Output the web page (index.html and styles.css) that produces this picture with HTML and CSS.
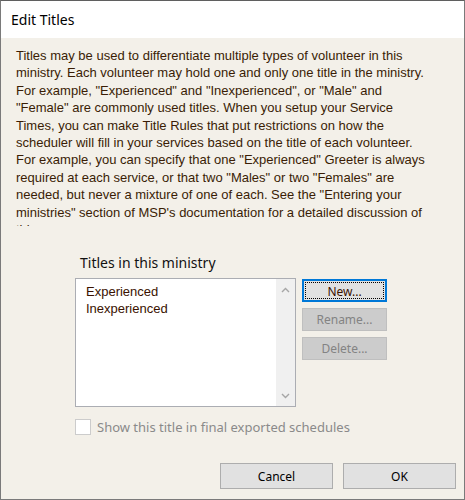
FILE: index.html
```html
<!DOCTYPE html>
<html lang="en">
<head>
    <meta charset="UTF-8">
    <title>Edit Titles</title>
    <link rel="stylesheet" href="styles.css">
</head>
<body>
    <div class="window">
        <div class="titlebar">Edit Titles</div>
        <div class="content">
            <div class="intro">
                Titles may be used to differentiate multiple types of volunteer in this<br>
                ministry. Each volunteer may hold one and only one title in the ministry.<br>
                For example, "Experienced" and "Inexperienced", or "Male" and<br>
                "Female" are commonly used titles. When you setup your Service<br>
                Times, you can make Title Rules that put restrictions on how the<br>
                scheduler will fill in your services based on the title of each volunteer.<br>
                For example, you can specify that one "Experienced" Greeter is always<br>
                required at each service, or that two "Males" or two "Females" are<br>
                needed, but never a mixture of one of each. See the "Entering your<br>
                ministries" section of MSP's documentation for a detailed discussion of<br>
                this.
            </div>

            <div class="titles">
                <div class="label">Titles in this ministry</div>
                <div class="row">
                    <div class="listbox">
                        <ul class="items">
                            <li>Experienced</li>
                            <li>Inexperienced</li>
                        </ul>
                        <div class="scrollbar">
                            <svg width="9" height="6" viewBox="0 0 9 6"><path d="M1 5 L4.5 1.5 L8 5" fill="none" stroke="#a6a6a6" stroke-width="1.4"/></svg>
                            <svg width="9" height="6" viewBox="0 0 9 6"><path d="M1 1 L4.5 4.5 L8 1" fill="none" stroke="#a6a6a6" stroke-width="1.4"/></svg>
                        </div>
                    </div>
                    <div class="side-btns">
                        <button class="btn focused"><span>New...</span></button>
                        <button class="btn" disabled>Rename...</button>
                        <button class="btn" disabled>Delete...</button>
                    </div>
                </div>
                <div class="check">
                    <span class="box"></span>
                    Show this title in final exported schedules
                </div>
            </div>

            <div class="footer">
                <button class="btn big">Cancel</button>
                <button class="btn big">OK</button>
            </div>
        </div>
    </div>
</body>
</html>
```

FILE: styles.css
```css
body{
    margin: 0;
}
.window{
    width: 465px;
    height: 500px;
    box-sizing: border-box;
    border: 1px solid #7a7a7a;
    border-top-color: #5f5f5f;
    background-color: #f3f0e9;
    display: flex;
    flex-direction: column;
}
.titlebar{
    height: 37px;
    background-color: #fff;
    padding-left: 10px;
    font-family: "Noto Sans", sans-serif;
    font-size: 14px;
    line-height: 37px;
    color: #000;
}
.content{
    flex: 1;
    display: flex;
    flex-direction: column;
}

/* 说明文字 */
.intro{
    margin-top: 9px;
    padding-left: 15px;
    height: 179px;
    overflow: hidden;
    font-family: "Liberation Sans", Arial, sans-serif;
    font-size: 13px;
    line-height: 17.4px;
    color: #3a1d05;
}

/* 列表区域 */
.titles{
    padding-left: 74px;
}
.label{
    margin-top: 28px;
    padding-left: 5px;
    font-family: "Noto Sans", sans-serif;
    font-size: 14px;
    line-height: 17px;
    color: #111;
}
.row{
    display: flex;
    margin-top: 7px;
}
.listbox{
    width: 221px;
    height: 129px;
    box-sizing: border-box;
    border: 1px solid #abadb3;
    background-color: #fff;
    display: flex;
}
.items{
    flex: 1;
    margin: 0;
    padding: 4px 0 0 10px;
    list-style: none;
    font-family: "Liberation Sans", Arial, sans-serif;
    font-size: 13px;
    line-height: 17px;
    color: #3a1200;
}
.scrollbar{
    width: 19px;
    background-color: #f0f0f0;
    display: flex;
    flex-direction: column;
    justify-content: space-between;
    align-items: center;
    padding: 8px 0 7px;
}
.side-btns{
    display: flex;
    flex-direction: column;
    gap: 6px;
    margin-left: 6px;
    margin-top: 1px;
}
.btn{
    box-sizing: border-box;
    width: 85px;
    height: 23px;
    padding: 0;
    border: 1px solid #adadad;
    background-color: #e1e1e1;
    font-family: "Noto Sans", sans-serif;
    font-size: 12px;
    color: #000;
}
.btn:disabled{
    background-color: #cccccc;
    border-color: #bfbfbf;
    color: #838383;
}
.focused{
    border: 2px solid #0078d7;
    position: relative;
}
.focused span{
    position: absolute;
    top: 1px;
    left: 1px;
    right: 1px;
    bottom: 1px;
    border: 1px dotted #000;
    line-height: 17px;
    color: #3a1200;
}
.check{
    margin-top: 11px;
    display: flex;
    align-items: center;
    gap: 6px;
    font-family: "Noto Sans", sans-serif;
    font-size: 13px;
    color: #8a8a8a;
}
.box{
    width: 16px;
    height: 16px;
    box-sizing: border-box;
    border: 1px solid #cccccc;
    background-color: #fff;
}

/* 底部按钮 */
.footer{
    margin-top: auto;
    display: flex;
    justify-content: flex-end;
    gap: 10px;
    padding: 0 8px 10px 0;
}
.big{
    width: 113px;
    height: 26px;
}
```
